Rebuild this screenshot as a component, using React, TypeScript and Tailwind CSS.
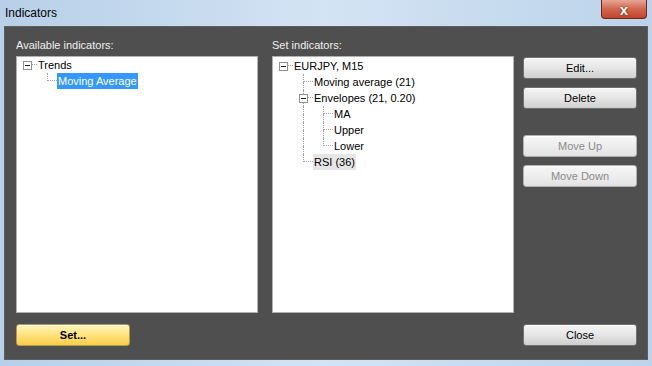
import React from 'react';

type Cell = 'blank' | 'pipe' | 'tee' | 'elbow' | 'root';

interface Row {
  cells: Cell[];
  box?: boolean;
  label: string;
  selected?: 'active' | 'inactive';
}

const LINE = 'border-dotted border-[#a0a0a0]';

const TreeCell: React.FC<{ type: Cell; box?: boolean }> = ({ type, box }) => {
  const vTop = type === 'pipe' || type === 'tee' || type === 'elbow';
  const vBottom = type === 'pipe' || type === 'tee';
  const hLine = type === 'tee' || type === 'elbow' || type === 'root';
  return (
    <div className="relative flex w-[20px] h-4 shrink-0">
      <div className="w-[10px] h-full" />
      <div className="flex flex-col flex-1">
        <div className={`h-2 ${LINE} ${vTop ? 'border-l' : ''} ${hLine ? 'border-b' : ''}`} />
        <div className={`h-2 ${LINE} ${vBottom ? 'border-l' : ''}`} />
      </div>
      {box && (
        <div className="absolute left-[6px] top-[4px] w-[9px] h-[9px] border border-[#919191] bg-white flex items-center justify-center">
          <div className="w-[5px] h-px bg-[#222]" />
        </div>
      )}
    </div>
  );
};

const Tree: React.FC<{ rows: Row[]; className?: string }> = ({ rows, className }) => (
  <div className={`bg-white border border-[#b0b0b0] h-[257px] ${className ?? ''}`}>
    {rows.map((r, i) => (
      <div key={i} className="flex items-center h-4">
        {r.cells.map((c, j) => (
          <TreeCell key={j} type={c} box={r.box && j === r.cells.length - 1} />
        ))}
        <span
          className={`h-4 leading-4 px-px text-[11px] ${
            r.selected === 'active'
              ? 'bg-[#3399ff] text-white'
              : r.selected === 'inactive'
              ? 'bg-[#e6e6e6] text-black'
              : 'text-black'
          }`}
        >
          {r.label}
        </span>
      </div>
    ))}
  </div>
);

const Button: React.FC<{ label: string; disabled?: boolean; primary?: boolean; className?: string }> = ({
  label,
  disabled,
  primary,
  className,
}) => {
  let look =
    'border-[#707070] bg-gradient-to-b from-[#f4f4f4] via-[#e6e6e6] to-[#cfcfcf] text-black';
  if (disabled)
    look = 'border-[#adb2b5] bg-gradient-to-b from-[#f6f6f6] via-[#eeeeee] to-[#e2e2e2] text-[#8a8a8a]';
  if (primary)
    look = 'border-[#b39a4c] bg-gradient-to-b from-[#fff4c0] via-[#ffe27a] to-[#f9cf48] text-black font-bold';
  return (
    <div
      className={`w-[114px] h-[22px] rounded-[3px] border flex items-center justify-center text-[11px] shadow-[inset_0_1px_0_rgba(255,255,255,0.8)] ${look} ${className ?? ''}`}
    >
      {label}
    </div>
  );
};

const availableRows: Row[] = [
  { cells: ['root'], box: true, label: 'Trends' },
  { cells: ['blank', 'elbow'], label: 'Moving Average', selected: 'active' },
];

const setRows: Row[] = [
  { cells: ['root'], box: true, label: 'EURJPY, M15' },
  { cells: ['blank', 'tee'], label: 'Moving average (21)' },
  { cells: ['blank', 'tee'], box: true, label: 'Envelopes (21, 0.20)' },
  { cells: ['blank', 'pipe', 'tee'], label: 'MA' },
  { cells: ['blank', 'pipe', 'tee'], label: 'Upper' },
  { cells: ['blank', 'pipe', 'elbow'], label: 'Lower' },
  { cells: ['blank', 'elbow'], label: 'RSI (36)', selected: 'inactive' },
];

export default function App() {
  return (
    <div
      className="w-[652px] h-[366px] flex flex-col bg-gradient-to-r from-[#b7cfe8] via-[#d3e4f4] to-[#bcd3ea] overflow-hidden"
      style={{ fontFamily: '"Liberation Sans", Arial, sans-serif' }}
    >
      {/* Title bar */}
      <div className="h-[26px] flex items-start justify-between shrink-0">
        <div className="pl-[5px] pt-[4px] text-[12px] text-black">Indicators</div>
        <div className="mr-[5px] w-[46px] h-[19px] rounded-b-[4px] border border-t-0 border-[#6b2a1f] bg-gradient-to-b from-[#e7a696] via-[#d0664f] to-[#c2432c] flex items-center justify-center">
          <span className="text-white font-bold text-[15px] leading-none [text-shadow:0_0_2px_#4a1a10]">x</span>
        </div>
      </div>

      {/* Client area */}
      <div className="mx-[4px] mb-[6px] flex-1 bg-[#4f4f4f] border border-[#5e5e5e] flex pl-[11px] pr-[8px]">
        <div className="w-[242px] flex flex-col pt-[11px]">
          <div className="h-[18px] text-[11px] text-[#f0f0f0] leading-[14px]">Available indicators:</div>
          <Tree rows={availableRows} />
          <Button label="Set..." primary className="mt-[11px]" />
        </div>

        <div className="w-[242px] ml-[14px] flex flex-col pt-[11px]">
          <div className="h-[18px] text-[11px] text-[#f0f0f0] leading-[14px]">Set indicators:</div>
          <Tree rows={setRows} className="pt-px" />
        </div>

        <div className="ml-[9px] flex flex-col pt-[30px] pb-[13px]">
          <Button label="Edit..." />
          <Button label="Delete" className="mt-[8px]" />
          <Button label="Move Up" disabled className="mt-[26px]" />
          <Button label="Move Down" disabled className="mt-[8px]" />
          <Button label="Close" className="mt-auto" />
        </div>
      </div>
    </div>
  );
}
